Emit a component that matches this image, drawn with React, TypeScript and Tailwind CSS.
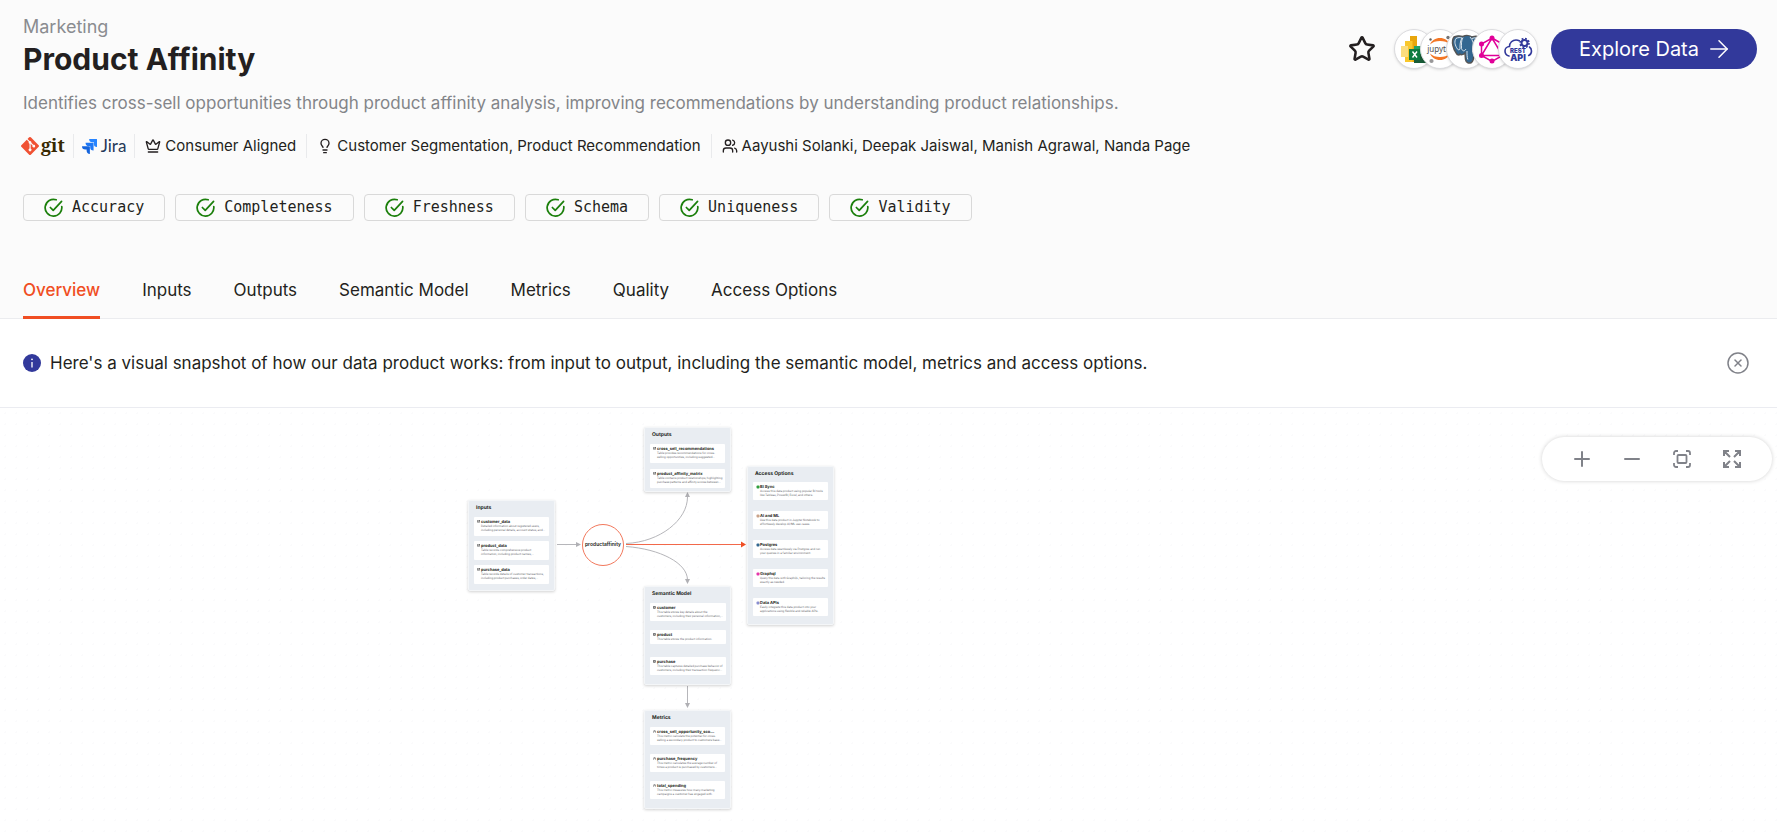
import { Crown, Lightbulb, Users, CircleX, Plus, Minus, Star, ArrowRight, Database, Table2, Gauge } from "lucide-react";
import type { ReactNode } from "react";

type NodeItem = { name: string; lines: string[]; icon: ReactNode };

const metaClass = "flex items-center gap-1 border-l border-[#e9eaec] px-[10px] h-6";

const dbIcon = <Database className="size-[3px] text-[#333]" strokeWidth={3} />;
const tableIcon = <Table2 className="size-[3px] text-[#333]" strokeWidth={3} />;
const gaugeIcon = <Gauge className="size-[3px] text-[#333]" strokeWidth={4} />;

function dot(color: string) {
  return (
    <svg viewBox="0 0 4 4" className="size-[4px]">
      <rect x="0.5" y="0.5" width="3" height="3" rx="1" fill={color} />
    </svg>
  );
}

const inputs: NodeItem[] = [
  { name: "customer_data", lines: ["Detailed information about registered users,", "including personal details, account status, and..."], icon: dbIcon },
  { name: "product_data", lines: ["Table records comprehensive product", "information, including product names,..."], icon: dbIcon },
  { name: "purchase_data", lines: ["Table records details of customer transactions,", "including product purchases, order dates,..."], icon: dbIcon },
];
const outputs: NodeItem[] = [
  { name: "cross_sell_recommendations", lines: ["Table provides recommendations for cross-", "selling opportunities, including suggested..."], icon: dbIcon },
  { name: "product_affinity_matrix", lines: ["Table contains product relationships, highlighting", "purchase patterns and affinity scores between..."], icon: dbIcon },
];
const access: NodeItem[] = [
  { name: "BI Sync", lines: ["Access this data product using popular BI tools", "like Tableau, PowerBI, Excel, and others."], icon: dot("#2e9e3f") },
  { name: "AI and ML", lines: ["Use this data product in Jupyter Notebook to", "effortlessly develop AI/ML use cases."], icon: dot("#c9a28a") },
  { name: "Postgres", lines: ["Access data seamlessly via Postgres and run", "your queries in a familiar environment."], icon: dot("#336791") },
  { name: "Graphql", lines: ["Query the data with GraphQL, tailoring the results", "exactly as needed."], icon: dot("#e535ab") },
  { name: "Data APIs", lines: ["Easily integrate this data product into your", "applications using flexible and reliable APIs."], icon: dot("#8a8fd0") },
];
const semantic: NodeItem[] = [
  { name: "customer", lines: ["This table stores key details about the", "customers, including their personal information,..."], icon: tableIcon },
  { name: "product", lines: ["This table stores the product information."], icon: tableIcon },
  { name: "purchase", lines: ["This table captures detailed purchase behavior of", "customers, including their transaction frequenc..."], icon: tableIcon },
];
const metrics: NodeItem[] = [
  { name: "cross_sell_opportunity_sco...", lines: ["This metric calculate the potential for cross-", "selling a secondary product to customers base..."], icon: gaugeIcon },
  { name: "purchase_frequency", lines: ["This metric calculates the average number of", "times a product is purchased by customers..."], icon: gaugeIcon },
  { name: "total_spending", lines: ["This metric measures how many marketing", "campaigns a customer has engaged with."], icon: gaugeIcon },
];

function Panel({ title, items, place, listClass }: { title: string; items: NodeItem[]; place: string; listClass: string }) {
  return (
    <section className={`absolute w-[87px] rounded-[2px] border border-[#f4f6f8] bg-[#e9edf2] px-[5px] shadow-[0_1px_3px_rgba(0,0,0,0.18)] [text-rendering:geometricPrecision] ${place}`}>
      <h2 className="pt-[4px] pl-[2px] text-[5px] leading-[7px] font-bold text-[#231f20]">{title}</h2>
      <ul className={`grid items-start ${listClass}`}>
        {items.map((item) => (
          <li key={item.name} className="flex rounded-[1px] bg-white px-[3px] pt-[2px] pb-[3px]">
            <span className="flex w-[4px] shrink-0 pt-px">{item.icon}</span>
            <div className="whitespace-nowrap">
              <h3 className="text-[4px] leading-[5px] font-bold text-[#231f20]">{item.name}</h3>
              {item.lines.map((line) => (
                <p key={line} className="font-['Roboto','Liberation_Sans',sans-serif] text-[3px] leading-[4px] text-[#6c6e73]">{line}</p>
              ))}
            </div>
          </li>
        ))}
      </ul>
    </section>
  );
}

function GitLogo() {
  return (
    <a href="#git" aria-label="git" className="flex h-6 items-center gap-[2px] pr-2">
      <svg viewBox="0 0 92 92" className="size-[18px]">
        <path fill="#f05133" d="M90.2 41.9 50.1 1.9a5.9 5.9 0 0 0-8.4 0l-8.3 8.3 10.6 10.6a7 7 0 0 1 8.9 8.9l10.2 10.2a7 7 0 1 1-4.2 4l-9.500-9.500v25a7 7 0 1 1-5.800-.2V34a7 7 0 0 1-3.800-9.200L29.300 14.300 1.700 41.900a5.900 5.900 0 0 0 0 8.300l40.100 40a5.900 5.900 0 0 0 8.300 0l40.100-40a5.900 5.900 0 0 0 0-8.300z" />
      </svg>
      <span className="pb-[3px] font-['Noto_Serif','DejaVu_Serif',serif] text-[18px] leading-5 font-bold text-[#362701]">git</span>
    </a>
  );
}

function JiraLogo() {
  return (
    <a href="#jira" aria-label="Jira" className="flex h-6 items-center gap-1 border-l border-[#e9eaec] px-2">
      <svg viewBox="0 0 24 24" className="size-[15px]">
        <path fill="#2684ff" d="M23.300 0H11.450a5.300 5.300 0 0 0 5.300 5.300h2.200v2.100a5.300 5.300 0 0 0 5.350 5.300V1a1 1 0 0 0-1-1z" />
        <path fill="#1f78f5" d="M17.500 5.800H5.700a5.300 5.300 0 0 0 5.300 5.350h2.100v2.050a5.300 5.300 0 0 0 5.400 5.250V6.800a1 1 0 0 0-1-1z" />
        <path fill="#1464dd" d="M11.600 11.500H0a5.300 5.300 0 0 0 5.300 5.350h2.100v2.100A5.300 5.300 0 0 0 12.600 24V12.500a1 1 0 0 0-1-1z" />
      </svg>
      <span className="font-['Lato',sans-serif] text-[17px] leading-5 text-[#253858]">Jira</span>
    </a>
  );
}

const chip = "flex size-10 items-center justify-center overflow-hidden rounded-full border border-[#dcdcdf] bg-white shadow-sm";

function ToolStack() {
  return (
    <div className="flex items-center -space-x-[14px]">
      <span className={chip}>
        <svg viewBox="0 0 40 40" className="size-10 shrink-0">
          <path fill="#e8a60c" d="M16 7h7v26h-7z" />
          <path fill="#f8c72c" d="M11 12h7.500v21H11z" />
          <path fill="#fbdd7d" d="M7 17h7v11H7z" />
          <path fill="#21a366" d="M20 17h14v8H20z" />
          <path fill="#107c41" d="M20 25h14v8H20z" />
          <path fill="#185c37" d="M27 25h7v9H20v-4z" />
          <rect x="15" y="20" width="11" height="11" fill="#107c41" />
          <path d="m18.500 22.500 4.500 6m0-6-4.500 6" stroke="#fff" strokeWidth="1.400" />
        </svg>
      </span>
      <span className={chip}>
        <svg viewBox="0 0 40 40" className="size-10 shrink-0">
          <path fill="#f37726" d="M10 15.500C11.500 11.500 15.500 9 20 9s8.500 2.500 10 6.500C27.500 13 24 12 20 12s-7.500 1-10 3.500z" />
          <path fill="#f37726" d="M10 24.500C11.500 28.500 15.500 31 20 31s8.500-2.500 10-6.500C27.500 27 24 28 20 28s-7.500-1-10-3.500z" />
          <circle cx="28" cy="8.500" r="1.700" fill="#767677" />
          <circle cx="11.500" cy="32" r="2.100" fill="#989798" />
          <circle cx="10.500" cy="10.500" r="1.200" fill="#616262" />
          <text x="20.500" y="22.500" textAnchor="middle" fontFamily="Noto Sans, sans-serif" fontSize="8" fill="#4e4e4e">jupyter</text>
        </svg>
      </span>
      <span className={chip}>
        <svg viewBox="0 0 40 40" className="size-10 shrink-0">
          <path fill="#336791" stroke="#555" strokeWidth="1.500" d="M8 8c4-2 7-1 9-.5C20 6 24 6.500 26 8c4-1.500 7-.5 8 1.500 1 4-2 10-5 13.500 2 1 4 0 5 .5-1 2-4 3-6 2.500-.3 3-.5 6-2.500 7.500-3 1.500-5.500 0-6-3l-.5-6.500c-2 2-4 2-5 1-1 1.500-2.500 1-3.500-.500C7 20 5 12 8 8z" />
          <path fill="none" stroke="#fff" strokeWidth=".8" d="M10 9.500c2.500-1.300 4-1 6-.5-2 3-2 7-2 11-.5 1-1.500 1.500-2.500 0C9 16.500 8 12.500 10 9.500zm7-1c-2 3-1.500 7.500-1.500 11 1 3 3 3 4.500.5m4-12c3 3 4 7 3 11.500l-.5 3.500m-5.500-1c0 3 0 6 .8 8.500M26 9.500c3-1 5-1 6.300.5.500 4-1.800 8-4.800 11" />
        </svg>
      </span>
      <span className={chip}>
        <svg viewBox="0 0 40 40" className="size-10 shrink-0" fill="#e10098">
          <path fill="none" stroke="#e10098" strokeWidth="1.500" d="m20 9 10.500 6v11.500l-10.500 6-10.500-6V15zM20 9 9.500 26.500h21z" />
          <circle cx="20" cy="9" r="2.500" /><circle cx="30.500" cy="15" r="2.500" /><circle cx="30.500" cy="26.500" r="2.500" />
          <circle cx="20" cy="32" r="2.500" /><circle cx="9.500" cy="26.500" r="2.500" /><circle cx="9.500" cy="15" r="2.500" />
        </svg>
      </span>
      <span className={chip}>
        <svg viewBox="0 0 40 40" className="size-10 shrink-0">
          <path fill="none" stroke="#32399b" strokeWidth="1.600" strokeLinecap="round" d="M11 27c-2.500-.500-4-2.500-4-5s2-4.500 4.500-4.500c0-4 3-6.500 6.500-6.500 1.300 0 2.300.2 3.200.7M31.500 18c1.500 1 2 2.500 2 4 0 2-1 3.800-2.800 4.500" />
          <circle cx="26.500" cy="14" r="3" fill="none" stroke="#32399b" strokeWidth="2" />
          <circle cx="26.500" cy="14" r="4.500" fill="none" stroke="#32399b" strokeWidth="1.600" strokeDasharray="1.800 1.734" />
          <text x="20" y="24" textAnchor="middle" fontFamily="Inter, sans-serif" fontWeight="900" fontSize="6" fill="#32399b">REST</text>
          <text x="20" y="32" textAnchor="middle" fontFamily="Inter, sans-serif" fontWeight="900" fontSize="9" fill="#32399b">API</text>
        </svg>
      </span>
    </div>
  );
}

const checks = ["Accuracy", "Completeness", "Freshness", "Schema", "Uniqueness", "Validity"];
const tabs = ["Overview", "Inputs", "Outputs", "Semantic Model", "Metrics", "Quality", "Access Options"];

function CheckIcon() {
  return (
    <svg viewBox="0 0 20 20" className="size-[19px]" fill="none" stroke="#1b7f0b" strokeWidth="1.800" strokeLinecap="round" strokeLinejoin="round">
      <path d="M12.800 1.900A8.800 8.800 0 1 0 18.700 9" />
      <path d="m6.700 10 3 3 8.800-9.500" />
    </svg>
  );
}

export default function App() {
  return (
    <div className="flex min-h-screen flex-col bg-white font-['Inter','Liberation_Sans',sans-serif] text-[#231f20]">
      <header className="border-b border-[#ebecef] bg-[#fbfbfb] pr-5 pl-[23px]">
        <div className="flex items-start justify-between pt-4">
          <div>
            <p className="text-[18px] leading-[22px] text-[#8a8c90]">Marketing</p>
            <h1 className="text-[30px] leading-[42px] font-bold">Product Affinity</h1>
          </div>
          <div className="flex items-center pt-[13px]">
            <button type="button" aria-label="Add to favourites" className="mr-[18px] flex">
              <Star className="size-7" strokeWidth={2.2} strokeLinejoin="miter" />
            </button>
            <ToolStack />
            <button type="button" className="ml-[13px] flex h-10 items-center gap-[6px] rounded-full bg-[#32399b] pr-6 pl-7 text-[20px] text-white">
              Explore Data
              <ArrowRight className="size-7" strokeWidth={1.300} />
            </button>
          </div>
        </div>
        <p className="mt-[10px] text-[17px] leading-[26px] text-[#838589]">
          Identifies cross-sell opportunities through product affinity analysis, improving recommendations by understanding product relationships.
        </p>
        <div className="mt-[18px] -ml-[2px] flex items-center text-[15px]">
          <GitLogo />
          <JiraLogo />
          <span className={metaClass}><Crown className="size-4" strokeWidth={2} />Consumer Aligned</span>
          <span className={metaClass}><Lightbulb className="size-4" strokeWidth={2} />Customer Segmentation, Product Recommendation</span>
          <span className={metaClass}><Users className="size-4" strokeWidth={2} />Aayushi Solanki, Deepak Jaiswal, Manish Agrawal, Nanda Page</span>
        </div>
        <ul className="mt-9 flex gap-[10px]">
          {checks.map((c) => (
            <li key={c} className="flex h-[27px] items-center gap-[9px] rounded-[4px] border border-[#d9d9d9] px-5 font-['DejaVu_Sans_Mono',monospace] text-[15px]">
              <CheckIcon />
              {c}
            </li>
          ))}
        </ul>
        <nav className="mt-[42px] flex gap-[42px] text-[17px]">
          {tabs.map((t, i) => (
            <a key={t} href="#tab" className={i === 0 ? "-mb-px border-b-3 border-[#f04e23] pt-[14px] pb-[13px] leading-[26px] font-medium text-[#f04e23]" : "pt-[14px] leading-[26px]"}>
              {t}
            </a>
          ))}
        </nav>
      </header>

      <div className="flex items-center border-b border-[#ebecf1] py-[31px] pr-[27px] pl-[23px]">
        <svg viewBox="0 0 18 18" className="size-[18px] shrink-0">
          <circle cx="9" cy="9" r="9" fill="#32399b" />
          <path d="M9 8v5.500" stroke="#fff" strokeWidth="1.300" />
          <circle cx="9" cy="5.300" r=".9" fill="#fff" />
        </svg>
        <p className="ml-[9px] flex-1 text-[17px] leading-[26px]">
          Here's a visual snapshot of how our data product works: from input to output, including the semantic model, metrics and access options.
        </p>
        <button type="button" aria-label="Dismiss" className="text-[#808289]">
          <CircleX className="size-6" strokeWidth={1.500} />
        </button>
      </div>

      <main className="relative min-h-[428px] flex-1 overflow-hidden bg-[radial-gradient(circle,#fbfbfc_1px,transparent_1px)] bg-size-[11px_11px]">
        <svg className="absolute top-0 left-0 h-[428px] w-[900px]" fill="none" stroke="#b6b6ba" strokeWidth="1">
          <path d="M557 136.500H578M626 135.500C660 134 687.500 112 687.500 89M626 138.500C660 141 687.500 155 687.500 172M687.500 278V297" />
          <path fill="#b0b0b4" stroke="none" d="M576 134l5 2.500-5 2.500zM685 89l2.500-5 2.500 5zM685 171l2.500 5 2.500-5zM685 295l2.500 5 2.500-5z" />
          <path stroke="#f2684a" d="M626 136.500H742" />
          <path fill="#f04e23" stroke="none" d="M741 133.500l5 3-5 3z" />
        </svg>
        <Panel title="Inputs" items={inputs} place="left-[468px] top-[92px] h-[91px]" listClass="mt-[5px] auto-rows-[24px] [&>li]:pb-[4px]" />
        <div className="absolute top-[116px] left-[582px] flex size-[42px] items-center justify-center rounded-full border border-[#f2785c] bg-white text-[5px] font-semibold">
          productaffinity
        </div>
        <Panel title="Outputs" items={outputs} place="left-[644px] top-[19px] h-[65px]" listClass="mt-[5px] auto-rows-[25px] [&>li]:pb-[4px]" />
        <Panel title="Access Options" items={access} place="left-[747px] top-[58px] h-[159px]" listClass="mt-[4px] auto-rows-[29px]" />
        <Panel title="Semantic Model" items={semantic} place="left-[644px] top-[178px] h-[99px]" listClass="mt-[5px] auto-rows-[27px]" />
        <Panel title="Metrics" items={metrics} place="left-[644px] top-[302px] h-[99px]" listClass="mt-[5px] auto-rows-[27px]" />

        <div className="absolute top-[29px] right-[5px] flex h-[44px] items-center gap-[26px] rounded-full bg-white px-[28px] text-[#808289] shadow-[0_0_4px_rgba(0,0,0,0.18)]">
          <button type="button" aria-label="Zoom in"><Plus className="size-6" /></button>
          <button type="button" aria-label="Zoom out"><Minus className="size-6" /></button>
          <button type="button" aria-label="Fit view">
            <svg viewBox="0 0 24 24" className="size-6" fill="none" stroke="currentColor" strokeWidth="1.800">
              <path d="M4 8V6a2 2 0 0 1 2-2h2M16 4h2a2 2 0 0 1 2 2v2M20 16v2a2 2 0 0 1-2 2h-2M8 20H6a2 2 0 0 1-2-2v-2" />
              <rect x="7.500" y="8" width="9" height="8" rx="1" />
            </svg>
          </button>
          <button type="button" aria-label="Full screen">
            <svg viewBox="0 0 24 24" className="size-6" fill="none" stroke="currentColor" strokeWidth="2">
              <path d="M4 9V4h5M4.500 4.500 10 10M15 4h5v5M19.500 4.500 14 10M20 15v5h-5M19.500 19.500 14 14M9 20H4v-5M4.500 19.500 10 14" />
            </svg>
          </button>
        </div>
      </main>
    </div>
  );
}
